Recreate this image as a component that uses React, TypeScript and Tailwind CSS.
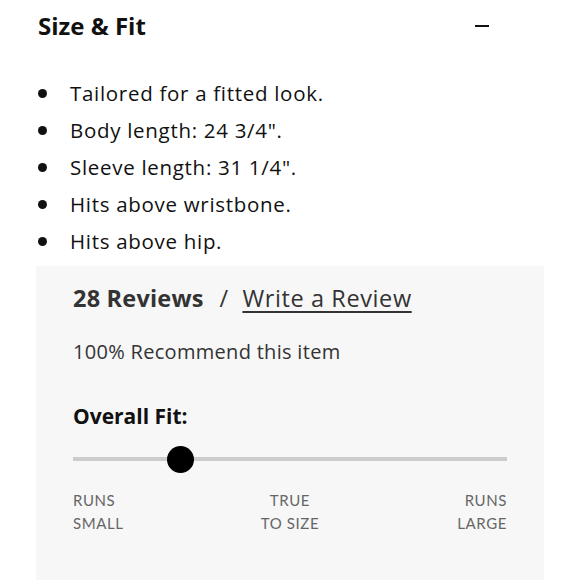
const bullets = [
  'Tailored for a fitted look.',
  'Body length: 24 3/4".',
  'Sleeve length: 31 1/4".',
  'Hits above wristbone.',
  'Hits above hip.',
];

export default function App() {
  return (
    <div className="w-[580px] h-[580px] overflow-hidden bg-white text-[#111] font-['Open_Sans','Lato',sans-serif]">
      <div className="flex items-center justify-between pl-[38px] pr-[91px] pt-[10px] h-[32px] box-content">
        <h2 className="text-[24px] font-bold leading-none">Size &amp; Fit</h2>
        <span className="block w-[14px] h-[2px] bg-[#111]"></span>
      </div>

      <ul className="mt-[33px] pl-[38px] flex flex-col">
        {bullets.map((b) => (
          <li key={b} className="flex items-center h-[37px] text-[20.5px] tracking-[0.7px]">
            <span className="w-[9px] h-[9px] rounded-full bg-[#111] mr-[23px]"></span>
            {b}
          </li>
        ))}
      </ul>

      <div className="mx-[36px] mt-[6px] bg-[#f7f7f7] px-[37px] pt-[18px] pb-[60px] text-[#333]">
        <div className="flex items-center h-[30px] text-[23.5px] tracking-[0.2px]">
          <span className="font-bold">28 Reviews</span>
          <span className="ml-[16px] mr-[14px]">/</span>
          <a className="underline underline-offset-[4px] decoration-[1.5px] tracking-[0.6px]">Write a Review</a>
        </div>
        <p className="mt-[28px] text-[20px] tracking-[0.3px] leading-none">100% Recommend this item</p>

        <p className="mt-[44px] text-[21px] font-bold text-[#111] leading-none">Overall Fit:</p>

        <div className="relative mt-[19px] h-[26px] flex items-center">
          <div className="w-full h-[4px] bg-[#cccccc]"></div>
          <div className="absolute left-[94px] top-0 w-[27px] h-[27px] rounded-full bg-black"></div>
        </div>

        <div className="mt-[17px] grid grid-cols-3 text-[15px] leading-[23px] tracking-[0.6px] text-[#666] font-['Lato',sans-serif]">
          <div>RUNS<br />SMALL</div>
          <div className="text-center">TRUE<br />TO SIZE</div>
          <div className="text-right">RUNS<br />LARGE</div>
        </div>
      </div>
    </div>
  );
}
